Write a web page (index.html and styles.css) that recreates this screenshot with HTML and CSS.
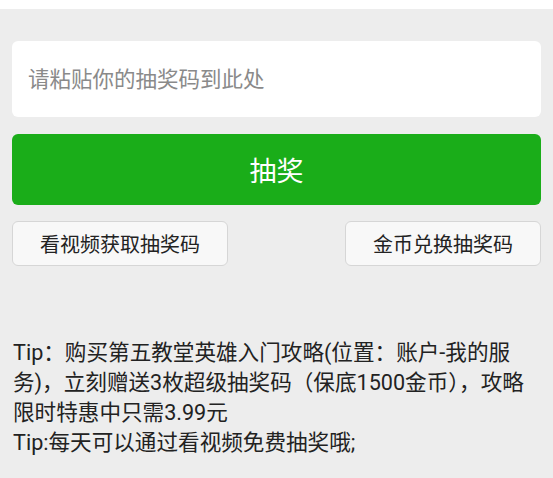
FILE: index.html
```html
<!DOCTYPE html>
<html lang="zh-CN">
<head>
    <meta charset="UTF-8">
    <meta name="viewport" content="width=device-width, initial-scale=1.0">
    <title>抽奖</title>
    <link rel="stylesheet" href="styles.css">
</head>
<body>
    <div class="topbar"></div>

    <div class="main">
        <input type="text" class="code-input" placeholder="请粘贴你的抽奖码到此处">
        <button class="btn-draw">抽奖</button>

        <div class="actions">
            <button class="btn-small">看视频获取抽奖码</button>
            <button class="btn-small">金币兑换抽奖码</button>
        </div>

        <div class="tips">
            <p>Tip：购买第五教堂英雄入门攻略(位置：账户-我的服务)，立刻赠送3枚超级抽奖码（保底1500金币），攻略限时特惠中只需3.99元</p>
            <p>Tip:每天可以通过看视频免费抽奖哦;</p>
        </div>
    </div>
</body>
</html>
```

FILE: styles.css
```css
* {
    margin: 0;
    padding: 0;
    box-sizing: border-box;
    font-family: Roboto, "Noto Sans CJK SC", sans-serif;
}
body {
    background: #ededed;
    color: #222;
}
.topbar {
    height: 9px;
    background: #fff;
}
.main {
    padding: 32px 12px 0;
}
.code-input {
    display: block;
    width: 100%;
    height: 76px;
    padding: 0 16px;
    border: none;
    outline: none;
    border-radius: 6px;
    background: #fff;
    font-size: 21.5px;
    color: #333;
}
.code-input::placeholder {
    color: #8a8a8a;
}
.btn-draw {
    display: block;
    width: 100%;
    height: 71px;
    margin-top: 17px;
    border: none;
    border-radius: 6px;
    background: #1aad19;
    color: #fff;
    font-size: 27px;
    cursor: pointer;
}
.actions {
    display: flex;
    justify-content: space-between;
    margin-top: 16px;
}
.btn-small {
    height: 45px;
    padding: 0 27px;
    border: 1px solid #d6d6d6;
    border-radius: 6px;
    background: #f8f8f8;
    color: #222;
    font-size: 20px;
    cursor: pointer;
}
.tips {
    margin-top: 72px;
    padding-left: 1px;
    font-size: 21.6px;
    line-height: 30px;
}
```
